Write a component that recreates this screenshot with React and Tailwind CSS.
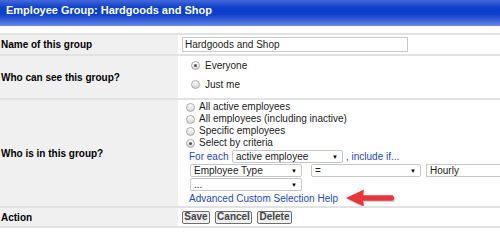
import React from 'react'

const font = { fontFamily: '"Liberation Sans", Arial, sans-serif' }

function Radio({ checked }) {
  return (
    <span className="relative w-[9px] h-[9px] shrink-0 rounded-full border border-[#a8a8a8] bg-[linear-gradient(to_bottom,#ffffff,#d6d6d6)] flex items-center justify-center">
      {checked && <span className="w-[3px] h-[3px] rounded-full bg-[#555]" />}
    </span>
  )
}

function FakeSelect({ value, className }) {
  return (
    <div className={`shrink-0 h-[13px] border border-[#c6c6c6] rounded-[2px] bg-white flex items-center justify-between pl-[3px] pr-[4px] text-[10px] leading-none text-[#222] ${className}`}>
      <span>{value}</span>
      <span className="text-[6px] text-black">▼</span>
    </div>
  )
}

function Row({ label, children, className = '', last }) {
  return (
    <div className={`grid grid-cols-[178px_minmax(0,1fr)] border-t-2 border-[#e2e2e2] ${last ? 'border-b-2' : ''} ${className}`}>
      <div className="bg-[#f0f0f0] flex items-center pl-[1px] text-[10px] font-bold text-black">{label}</div>
      <div className="bg-white overflow-hidden">{children}</div>
    </div>
  )
}

export default function App() {
  return (
    <div className="w-[500px] h-[237px] bg-white overflow-hidden" style={font}>
      <div className="h-[26px] pl-[6px] pt-[3px] text-[11px] leading-[14px] font-bold text-white bg-[linear-gradient(to_bottom,#4469d8_0%,#0b3fcc_30%,#0d40cb_55%,#3d64d8_80%,#6a8be2_100%)]">
        Employee Group: Hardgoods and Shop
      </div>
      <div className="h-[7px]" />

      <Row label="Name of this group" className="h-[21px]">
        <div className="h-full flex items-center pl-[4px]">
          <div className="w-[226px] h-[15px] border border-[#c8c8c8] flex items-center pl-[2px] text-[10px] text-[#222]">
            Hardgoods and Shop
          </div>
        </div>
      </Row>

      <Row label="Who can see this group?" className="h-[44px]">
        <div className="flex flex-col pl-[13px] text-[10px] text-[#222]">
          <label className="h-[19px] flex items-center gap-[5px]"><Radio checked /> Everyone</label>
          <label className="h-[19px] flex items-center gap-[5px]"><Radio /> Just me</label>
        </div>
      </Row>

      <Row label="Who is in this group?" className="h-[108px]">
        <div className="pt-[1px] text-[10px] text-[#222]">
          <div className="pl-[8px] flex flex-col">
            {['All active employees', 'All employees (including inactive)', 'Specific employees', 'Select by criteria'].map((t, i) => (
              <label key={t} className="h-[12px] flex items-center gap-[4px] leading-none">
                <Radio checked={i === 3} /> {t}
              </label>
            ))}
          </div>
          <div className="mt-[1px] pl-[11px] flex items-center h-[13px] text-[#2347c5]">
            <span className="w-[43px] shrink-0">For each</span>
            <FakeSelect value="active employee" className="w-[111px]" />
            <span className="ml-[3px]">, include if...</span>
          </div>
          <div className="mt-[1px] pl-[12px] flex items-center h-[13px]">
            <FakeSelect value="Employee Type" className="w-[112px]" />
            <FakeSelect value="=" className="w-[110px] ml-[9px]" />
            <div className="shrink-0 w-[100px] h-[13px] ml-[5px] border border-[#c6c6c6] flex items-center pl-[3px] text-[10px]">Hourly</div>
          </div>
          <div className="mt-[1px] pl-[12px] flex items-center h-[13px]">
            <FakeSelect value="..." className="w-[112px]" />
          </div>
          <div className="mt-[2px] pl-[11px] flex items-center h-[12px]">
            <a className="text-[#2347c5] leading-none">Advanced Custom Selection Help</a>
            <svg width="54" height="20" viewBox="0 0 54 20" className="ml-[8px] shrink-0">
              <g transform="translate(0.8,1.6)" fill="#9a9a9a" opacity="0.45">
                <path d="M0 9 L18 0.5 L17 6.5 L47 6.5 Q50.5 9 47 11.5 L17 11.5 L18 17.5 Z" />
              </g>
              <path d="M0 9 L18 0.5 L17 6.2 L46.5 6.2 Q50 9 46.5 11.8 L17 11.8 L18 17.5 Z" fill="#e8343b" />
            </svg>
          </div>
        </div>
      </Row>

      <Row label="Action" className="h-[22px]" last>
        <div className="h-full flex items-center pl-[4px] gap-[5px]">
          {[['Save', 'w-[28px]'], ['Cancel', 'w-[37px]'], ['Delete', 'w-[35px]']].map(([t, w]) => (
            <button key={t} className={`${w} h-[13px] border border-[#6e6e6e] rounded-[2px] bg-[#f0f0f0] text-[10px] font-bold text-[#444] leading-none flex items-center justify-center`}>
              {t}
            </button>
          ))}
        </div>
      </Row>
    </div>
  )
}
